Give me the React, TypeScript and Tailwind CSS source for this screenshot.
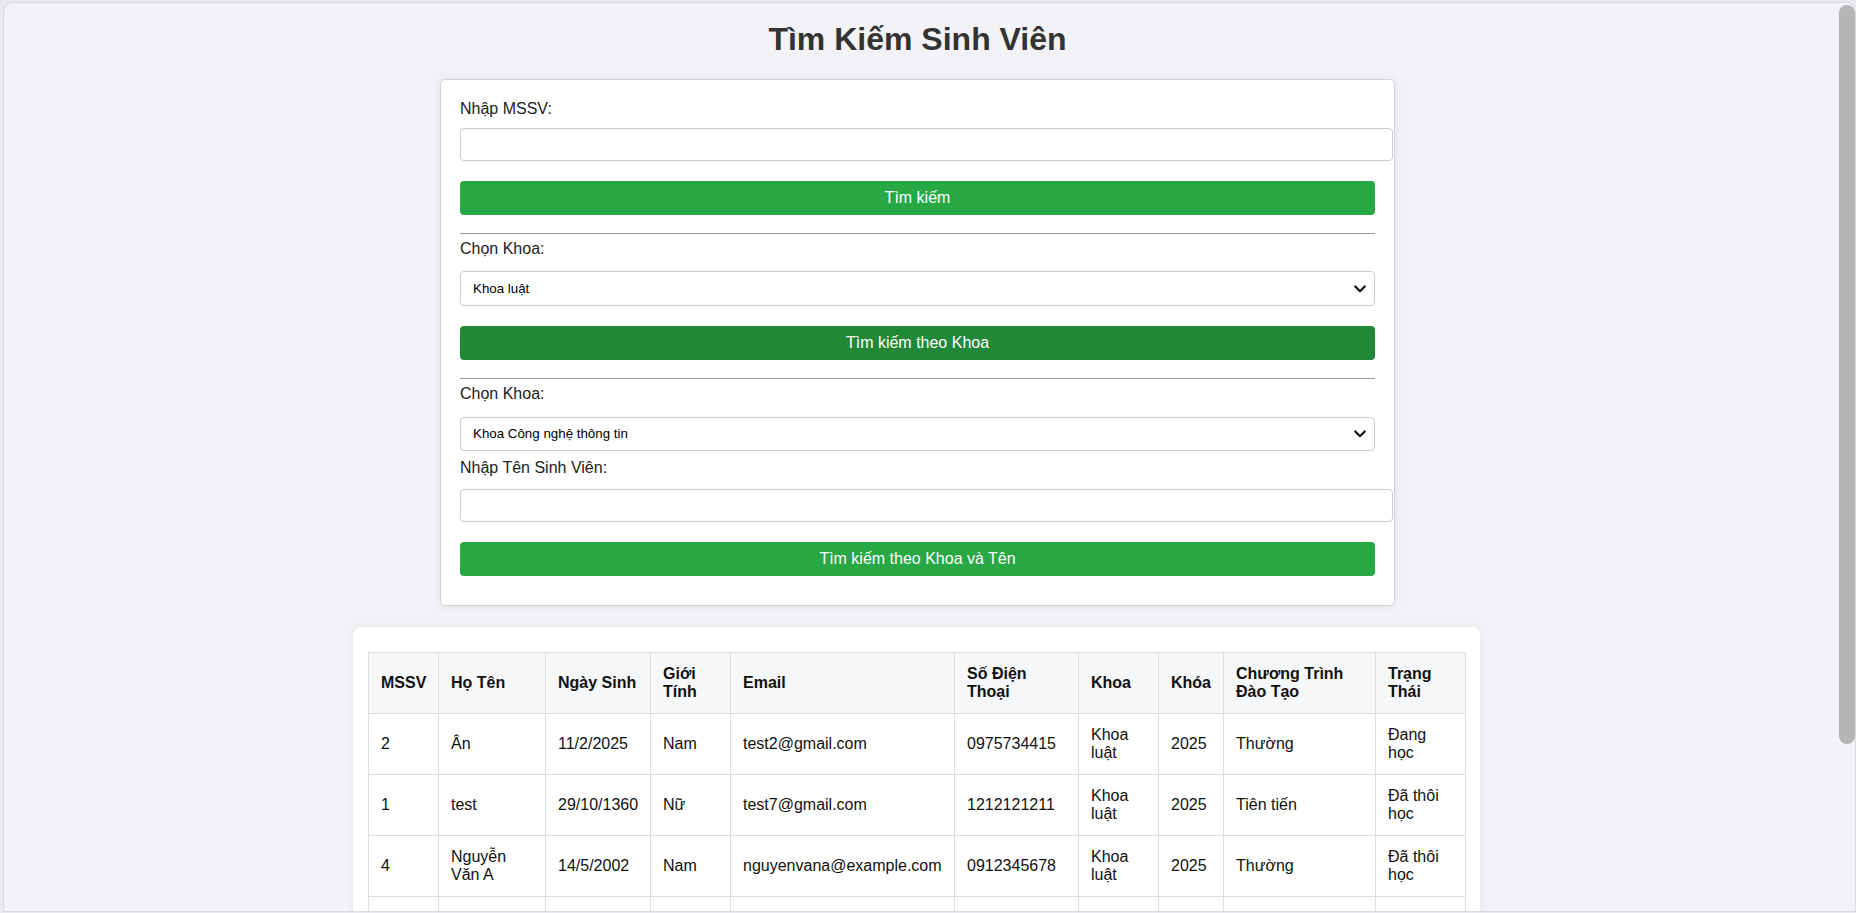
import type { ReactNode } from "react";

type Student = {
  mssv: string;
  hoTen: string;
  ngaySinh: string;
  gioiTinh: string;
  email: string;
  sdt: string;
  khoa: string;
  khoaHoc: string;
  chuongTrinh: string;
  trangThai: string;
};

const STUDENTS: Student[] = [
  {
    mssv: "2",
    hoTen: "Ân",
    ngaySinh: "11/2/2025",
    gioiTinh: "Nam",
    email: "test2@gmail.com",
    sdt: "0975734415",
    khoa: "Khoa luật",
    khoaHoc: "2025",
    chuongTrinh: "Thường",
    trangThai: "Đang học",
  },
  {
    mssv: "1",
    hoTen: "test",
    ngaySinh: "29/10/1360",
    gioiTinh: "Nữ",
    email: "test7@gmail.com",
    sdt: "1212121211",
    khoa: "Khoa luật",
    khoaHoc: "2025",
    chuongTrinh: "Tiên tiến",
    trangThai: "Đã thôi học",
  },
  {
    mssv: "4",
    hoTen: "Nguyễn Văn A",
    ngaySinh: "14/5/2002",
    gioiTinh: "Nam",
    email: "nguyenvana@example.com",
    sdt: "0912345678",
    khoa: "Khoa luật",
    khoaHoc: "2025",
    chuongTrinh: "Thường",
    trangThai: "Đã thôi học",
  },
];

const COLUMNS: { label: string; width: string }[] = [
  { label: "MSSV", width: "w-[70px]" },
  { label: "Họ Tên", width: "w-[107px]" },
  { label: "Ngày Sinh", width: "w-[105px]" },
  { label: "Giới Tính", width: "w-[80px]" },
  { label: "Email", width: "w-[224px]" },
  { label: "Số Điện Thoại", width: "w-[124px]" },
  { label: "Khoa", width: "w-[80px]" },
  { label: "Khóa", width: "w-[65px]" },
  { label: "Chương Trình Đào Tạo", width: "w-[152px]" },
  { label: "Trạng Thái", width: "w-[90px]" },
];

const FACULTIES = ["Khoa luật", "Khoa Công nghệ thông tin", "Khoa Tiếng Anh thương mại", "Khoa Tiếng Nhật"];

function Label({ children, className }: { children: ReactNode; className: string }) {
  return <label className={`block text-base leading-[18px] text-[#222] ${className}`}>{children}</label>;
}

function TextInput() {
  return (
    <input
      type="text"
      className="block h-[33px] w-[calc(100%+18px)] rounded-[4px] border border-[#cccccc] bg-white px-2 text-base outline-none"
    />
  );
}

function FacultySelect({ value, height }: { value: string; height: string }) {
  return (
    <div className="relative">
      <select
        defaultValue={value}
        className={`block w-full appearance-none rounded-[4px] border border-[#cccccc] bg-white pl-3 pr-8 text-[13.33px] text-black outline-none ${height}`}
      >
        {FACULTIES.map((f) => (
          <option key={f} value={f}>
            {f}
          </option>
        ))}
      </select>
      <svg
        className="pointer-events-none absolute right-[9px] top-1/2 -translate-y-1/2"
        width="12"
        height="8"
        viewBox="0 0 12 8"
        fill="none"
      >
        <path d="M1.3 1.5 L6 6.2 L10.7 1.5" stroke="#111" strokeWidth="2.2" strokeLinecap="round" strokeLinejoin="round" />
      </svg>
    </div>
  );
}

function GreenButton({ children, dark }: { children: ReactNode; dark?: boolean }) {
  return (
    <button
      type="button"
      className={`mt-[20px] block h-[34px] w-full rounded-[4px] text-base text-white ${
        dark ? "bg-[#218838]" : "bg-[#28a745]"
      }`}
    >
      {children}
    </button>
  );
}

function SearchCard() {
  return (
    <section className="mx-auto w-[955px] rounded-[5px] border border-[#d4d4d8] bg-white px-[19px] pb-[29px] pt-[20px] shadow-[0_0_8px_rgba(0,0,0,0.08)]">
      <Label className="mb-[10px]">Nhập MSSV:</Label>
      <TextInput />
      <GreenButton>Tìm kiếm</GreenButton>

      <hr className="mt-[18px] border-0 border-t border-[#9a9a9a]" />
      <Label className="mb-[13px] mt-[6px]">Chọn Khoa:</Label>
      <FacultySelect value="Khoa luật" height="h-[35px]" />
      <GreenButton dark>Tìm kiếm theo Khoa</GreenButton>

      <hr className="mt-[18px] border-0 border-t border-[#9a9a9a]" />
      <Label className="mb-[14px] mt-[6px]">Chọn Khoa:</Label>
      <FacultySelect value="Khoa Công nghệ thông tin" height="h-[34px]" />
      <Label className="mb-[12px] mt-[8px]">Nhập Tên Sinh Viên:</Label>
      <TextInput />
      <GreenButton>Tìm kiếm theo Khoa và Tên</GreenButton>
    </section>
  );
}

function ResultTable() {
  return (
    <section className="ml-[349px] mt-[21px] w-[1127px] rounded-[8px] bg-white px-[15px] pb-5 pt-[25px] shadow-[0_0_8px_rgba(0,0,0,0.06)]">
      <table className="w-[1097px] table-fixed border-collapse text-base leading-[18px] text-[#111]">
        <colgroup>
          {COLUMNS.map((c) => (
            <col key={c.label} className={c.width} />
          ))}
        </colgroup>
        <thead>
          <tr className="bg-[#f6f7f9]">
            {COLUMNS.map((c) => (
              <th key={c.label} className="border border-[#dddddd] px-3 py-3 text-left align-middle font-bold">
                {c.label}
              </th>
            ))}
          </tr>
        </thead>
        <tbody>
          {STUDENTS.map((s) => (
            <tr key={s.mssv}>
              {[s.mssv, s.hoTen, s.ngaySinh, s.gioiTinh, s.email, s.sdt, s.khoa, s.khoaHoc, s.chuongTrinh, s.trangThai].map(
                (v, i) => (
                  <td key={i} className="h-[61px] border border-[#dddddd] px-3 py-3 align-middle">
                    {v}
                  </td>
                ),
              )}
            </tr>
          ))}
          {/* next row starts just above the fold */}
          <tr>
            {COLUMNS.map((c) => (
              <td key={c.label} className="h-[61px] border border-[#dddddd] px-3 py-3" />
            ))}
          </tr>
        </tbody>
      </table>
    </section>
  );
}

export default function App() {
  return (
    <div className="h-[913px] w-[1856px] overflow-hidden bg-[#e9e9ed] pl-[3px] pt-[2px] font-['Liberation_Sans',Arial,sans-serif]">
      <div className="flex h-[910px] overflow-hidden rounded-t-[10px] border border-[#d9d9de] bg-[#f3f3f7]">
        <main className="w-[1827px] shrink-0">
          <h1 className="mb-[21px] mt-[18px] text-center text-[32px] font-bold leading-[37px] text-[#333]">
            Tìm Kiếm Sinh Viên
          </h1>
          <SearchCard />
          <ResultTable />
        </main>
        <div className="flex flex-1 justify-end pt-[2px]">
          <div className="h-[739px] w-[16px] rounded-full bg-[#b5b5b5]" />
        </div>
      </div>
    </div>
  );
}
